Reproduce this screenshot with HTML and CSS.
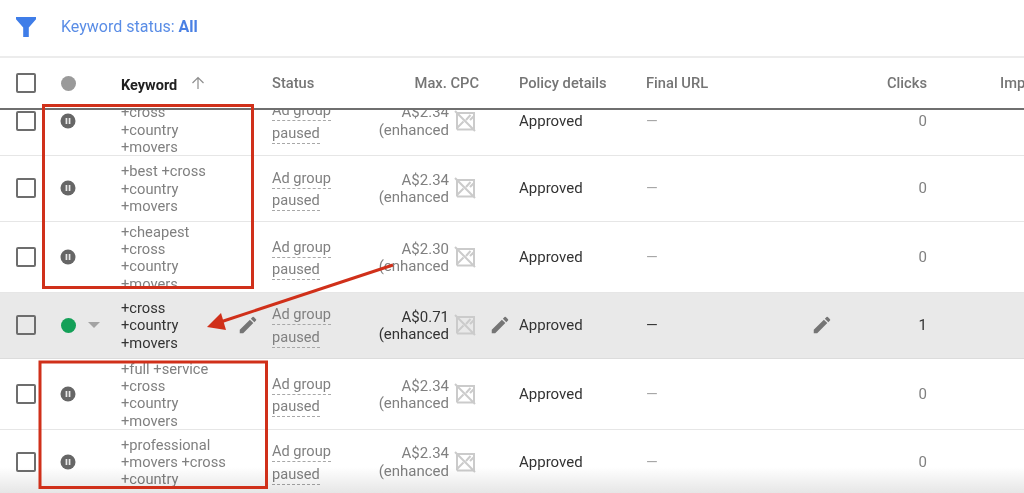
FILE: index.html
```html
<!DOCTYPE html>
<html lang="en">
<head>
<meta charset="utf-8">
<title>Keywords</title>
<link rel="stylesheet" href="styles.css">
</head>
<body>
<svg width="0" height="0" class="defs">
  <defs>
    <symbol id="pencil" viewBox="0 0 24 24"><path d="M3 17.25V21h3.75L17.81 9.94l-3.75-3.75L3 17.25zM20.71 7.04a1 1 0 0 0 0-1.41l-2.34-2.34a1 1 0 0 0-1.41 0l-1.83 1.83 3.75 3.75 1.83-1.83z"/></symbol>
    <symbol id="noimg" viewBox="0 0 22 22"><path d="M3 3h17v16.500H3M3 3v16.500M1 1l20 20M3 18l6.500-6.500M12 10l4.500-5M16 10l4-4" fill="none" stroke="currentColor" stroke-width="2"/></symbol>
    <symbol id="pause" viewBox="0 0 16 16"><circle cx="8" cy="8" r="7.500"/><path d="M5.600 5h1.700v6H5.600zM8.700 5h1.700v6H8.700z" fill="#fff" opacity=".85"/></symbol>
  </defs>
</svg>
<div class="page">
  <div class="filter">
    <svg class="funnel" viewBox="0 0 20 20"><path d="M0 0h20v2.200L12.800 10.500V20H7.200V10.500L0 2.200z"/></svg>
    <span class="filter-text">Keyword status: <b>All</b></span>
  </div>
  <div class="row head">
    <span class="cell c-check"><span class="box"></span></span>
    <span class="cell c-dot"><span class="dot"></span></span>
    <span class="cell c-kw"><b class="kw-title">Keyword</b><svg class="arrow-up" viewBox="0 0 14 14"><path d="M7 13V1.500M1.500 7 7 1.500 12.500 7" fill="none" stroke="currentColor" stroke-width="1.200"/></svg></span>
    <span class="cell c-status">Status</span>
    <span class="cell c-cpc">Max. CPC</span>
    <span class="cell c-policy">Policy details</span>
    <span class="cell c-url">Final URL</span>
    <span class="cell c-clicks">Clicks</span>
    <span class="cell c-imp">Imp</span>
  </div>
  <div class="body">
    <div class="row item first tall">
      <span class="cell c-check"><span class="box"></span></span>
      <span class="cell c-dot"><svg class="pause"><use href="#pause"/></svg></span>
      <span class="cell c-kw"><span class="kw kw-low">+cross<br>+country<br>+movers</span></span>
      <span class="cell c-status"><span class="st"><u>Ad group</u><u>paused</u></span></span>
      <span class="cell c-cpc"><span class="cpc">A$2.34<br>(enhanced</span><svg class="noimg"><use href="#noimg"/></svg></span>
      <span class="cell c-policy">Approved</span>
      <span class="cell c-url">—</span>
      <span class="cell c-clicks">0</span>
    </div>
    <div class="row item">
      <span class="cell c-check"><span class="box"></span></span>
      <span class="cell c-dot"><svg class="pause"><use href="#pause"/></svg></span>
      <span class="cell c-kw"><span class="kw">+best +cross<br>+country<br>+movers</span></span>
      <span class="cell c-status"><span class="st"><u>Ad group</u><u>paused</u></span></span>
      <span class="cell c-cpc"><span class="cpc">A$2.34<br>(enhanced</span><svg class="noimg"><use href="#noimg"/></svg></span>
      <span class="cell c-policy">Approved</span>
      <span class="cell c-url">—</span>
      <span class="cell c-clicks">0</span>
    </div>
    <div class="row item tall">
      <span class="cell c-check"><span class="box"></span></span>
      <span class="cell c-dot"><svg class="pause"><use href="#pause"/></svg></span>
      <span class="cell c-kw"><span class="kw">+cheapest<br>+cross<br>+country<br>+movers</span></span>
      <span class="cell c-status"><span class="st"><u>Ad group</u><u>paused</u></span></span>
      <span class="cell c-cpc"><span class="cpc">A$2.30<br>(enhanced</span><svg class="noimg"><use href="#noimg"/></svg></span>
      <span class="cell c-policy">Approved</span>
      <span class="cell c-url">—</span>
      <span class="cell c-clicks">0</span>
    </div>
    <div class="row item active">
      <span class="cell c-check"><span class="box"></span></span>
      <span class="cell c-dot"><span class="dot green"></span><span class="caret"></span></span>
      <span class="cell c-kw"><span class="kw">+cross<br>+country<br>+movers</span><svg class="pencil p-kw"><use href="#pencil"/></svg></span>
      <span class="cell c-status"><span class="st"><u>Ad group</u><u>paused</u></span></span>
      <span class="cell c-cpc"><span class="cpc">A$0.71<br>(enhanced</span><svg class="noimg"><use href="#noimg"/></svg><svg class="pencil p-cpc"><use href="#pencil"/></svg></span>
      <span class="cell c-policy">Approved</span>
      <span class="cell c-url">—<svg class="pencil p-url"><use href="#pencil"/></svg></span>
      <span class="cell c-clicks">1</span>
    </div>
    <div class="row item tall">
      <span class="cell c-check"><span class="box"></span></span>
      <span class="cell c-dot"><svg class="pause"><use href="#pause"/></svg></span>
      <span class="cell c-kw"><span class="kw">+full +service<br>+cross<br>+country<br>+movers</span></span>
      <span class="cell c-status"><span class="st"><u>Ad group</u><u>paused</u></span></span>
      <span class="cell c-cpc"><span class="cpc">A$2.34<br>(enhanced</span><svg class="noimg"><use href="#noimg"/></svg></span>
      <span class="cell c-policy">Approved</span>
      <span class="cell c-url">—</span>
      <span class="cell c-clicks">0</span>
    </div>
    <div class="row item">
      <span class="cell c-check"><span class="box"></span></span>
      <span class="cell c-dot"><svg class="pause"><use href="#pause"/></svg></span>
      <span class="cell c-kw"><span class="kw">+professional<br>+movers +cross<br>+country</span></span>
      <span class="cell c-status"><span class="st"><u>Ad group</u><u>paused</u></span></span>
      <span class="cell c-cpc"><span class="cpc">A$2.34<br>(enhanced</span><svg class="noimg"><use href="#noimg"/></svg></span>
      <span class="cell c-policy">Approved</span>
      <span class="cell c-url">—</span>
      <span class="cell c-clicks">0</span>
    </div>
  </div>
  <div class="fade"></div>
  <svg class="annot" viewBox="0 0 1024 493">
    <rect x="43.500" y="105.500" width="209" height="182" fill="none" stroke="#d0301a" stroke-width="3"/>
    <rect x="40" y="362" width="226.500" height="125.500" fill="none" stroke="#d0301a" stroke-width="3"/>
    <path d="M393 265 222 321.500" stroke="#d0301a" stroke-width="3" fill="none"/>
    <path d="M207 327 221 313 226 330z" fill="#d0301a"/>
  </svg>
</div>
</body>
</html>
```
FILE: styles.css
```css
* { box-sizing: border-box; }
html, body { margin: 0; padding: 0; }
body { font-family: Roboto, "Liberation Sans", sans-serif; background: #fff; overflow: hidden; }
.defs { position: absolute; }
.page { position: relative; width: 1024px; height: 493px; overflow: hidden; display: flex; flex-direction: column; }

.filter { height: 58px; flex: none; display: flex; align-items: center; gap: 25px; padding: 0 0 3px 16px; border-bottom: 2px solid #ececec; }
.funnel { width: 20px; height: 20px; fill: #3f7de8; }
.filter-text { font-size: 16px; color: #5a8de6; }
.filter-text b { font-weight: 700; color: #4a80e4; }

.row { display: grid; grid-template-columns: 50px 71px 151px 107px 140px 127px 221px 60px 1fr; align-items: center; font-size: 15px; }
.cell { position: relative; display: flex; align-items: center; }
.head { height: 52px; flex: none; color: #757575; font-weight: 500; font-size: 14.700px; border-bottom: 2px solid #6f6f6f; }
.head .c-cpc { padding-right: 40px; white-space: nowrap; }

.body { flex: 1; overflow: hidden; }
.item { height: 65.500px; border-bottom: 1px solid #e6e6e6; color: #808080; }
.first { margin-top: -25px; }
.item.tall { height: 71px; }
.item.active { height: 66px; background: #e9e9e9; color: #333; border-bottom-color: #dcdcdc; }

.c-check { padding-left: 16px; }
.box { width: 20px; height: 20px; border: 2.500px solid #6d6d6d; border-radius: 2px; }
.dot { width: 15px; height: 15px; border-radius: 50%; background: #9a9a9a; margin-left: 11px; }
.green { background: #14a058; }
.caret { width: 0; height: 0; margin-left: 12px; border-left: 6px solid transparent; border-right: 6px solid transparent; border-top: 6px solid #a3a3a3; }
.pause { width: 16px; height: 16px; margin-left: 10px; fill: #666; }
.kw-title { color: #212121; font-size: 14.500px; font-weight: 700; position: relative; top: 2px; }
.arrow-up { width: 14px; height: 14px; color: #8e8e8e; margin-left: 14px; }
.kw { line-height: 17.400px; font-size: 14.700px; white-space: nowrap; padding-top: 2px; }
.kw-low { margin-top: 17.400px; }
.item .c-kw { height: 100%; }

.st { display: flex; flex-direction: column; gap: 1.500px; position: relative; top: 1px; color: #808080; }
.st u { display: block; width: max-content; text-decoration: none; line-height: 20px; font-size: 14.600px; border-bottom: 1px dashed #a8a8a8; }
.c-cpc { justify-content: flex-end; }
.item .c-cpc { padding-right: 70px; }
.cpc { text-align: right; line-height: 17.500px; font-size: 15px; white-space: nowrap; padding-top: 2px; }
.noimg { position: absolute; right: 43px; width: 22px; height: 22px; color: #cbcbcb; top: 50%; margin-top: -11px; }
.pencil { position: absolute; width: 22px; height: 22px; fill: #757575; top: 50%; margin-top: -11px; }
.p-kw { left: 116px; }
.p-cpc { right: 8px; }
.p-url { left: 165px; }

.item .c-policy { color: #333; }
.item .c-url { color: #a5a5a5; }
.item.active .c-url, .item.active .c-clicks { color: #333; }
.c-clicks { justify-content: flex-end; }
.head .c-imp { padding-left: 73px; white-space: nowrap; }

.fade { position: absolute; left: 0; right: 0; bottom: 0; height: 26px; background: linear-gradient(#fff, #e6e6e6); mix-blend-mode: multiply; pointer-events: none; }
.annot { position: absolute; inset: 0; width: 1024px; height: 493px; pointer-events: none; }
```
